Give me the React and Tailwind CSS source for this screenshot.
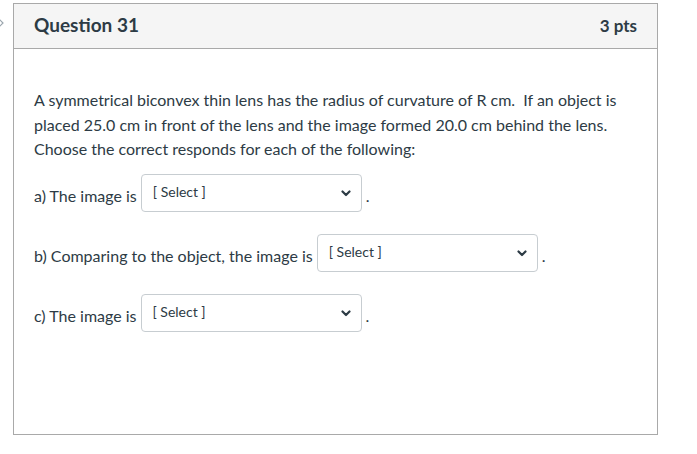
import React from 'react';

// Single answer dropdown, drawn as a closed select box
function SelectBox({ width = 'w-[221px]' }) {
  return (
    <div className={`${width} h-[38px] border border-[#c7cdd1] rounded-[4px] bg-white flex items-center justify-between pl-[11px] pr-[10px]`}>
      <span className="text-[14px] text-[#2d3b45] -mt-[2px]">[ Select ]</span>
      <svg className="w-[10px] h-[10px] text-[#2d3b45]" viewBox="0 0 10 10" fill="none">
        <path d="M1.5 3.5 L5 7 L8.5 3.5" stroke="currentColor" strokeWidth="2.2" strokeLinecap="round" strokeLinejoin="round" />
      </svg>
    </div>
  );
}

function AnswerRow({ label }) {
  return (
    <div className="flex items-center gap-[4px] h-[38px]">
      <span className="text-[16px] leading-[24px] mt-[6px]">{label}</span>
      <SelectBox />
      <span className="text-[16px] leading-[24px] mt-[6px]">.</span>
    </div>
  );
}

export default function App() {
  return (
    <div
      className="relative w-[697px] h-[454px] bg-white text-[#2d3b45]"
      style={{ fontFamily: 'Lato, "Noto Sans", sans-serif' }}
    >
      {/* partial nav chevron cut off at the left edge */}
      <svg className="absolute left-[-4px] top-[17px] w-[9px] h-[12px]" viewBox="0 0 9 12" fill="none">
        <path d="M2 1 L7 6 L2 11" stroke="#9aa5ad" strokeWidth="1.2" />
      </svg>

      <div className="absolute left-[13px] top-[3px] w-[645px] h-[432px] border border-[#a9a9a9] bg-white">
        {/* header */}
        <div className="h-[45px] bg-[#f5f5f5] border-b border-[#a9a9a9] px-[20px] flex items-center justify-between">
          <h2 className="text-[19px] font-bold -mt-[2px]">Question 31</h2>
          <span className="text-[17px] font-bold">3 pts</span>
        </div>

        {/* body */}
        <div className="px-[20px] pt-[39px]">
          <p className="text-[16px] leading-[24.5px]">
            A symmetrical biconvex thin lens has the radius of curvature of R cm.&nbsp; If an object is placed 25.0 cm in front of the lens and the image formed 20.0 cm behind the lens. Choose the correct responds for each of the following:
          </p>

          <div className="mt-[12px] flex flex-col gap-[22px]">
            <AnswerRow label="a) The image is" />
            <div className="flex items-center gap-[4px] h-[38px]">
              <span className="text-[16px] leading-[24px] mt-[6px]">b) Comparing to the object, the image is</span>
              <SelectBox />
              <span className="text-[16px] leading-[24px] mt-[6px]">.</span>
            </div>
            <AnswerRow label="c) The image is" />
          </div>
        </div>
      </div>
    </div>
  );
}
